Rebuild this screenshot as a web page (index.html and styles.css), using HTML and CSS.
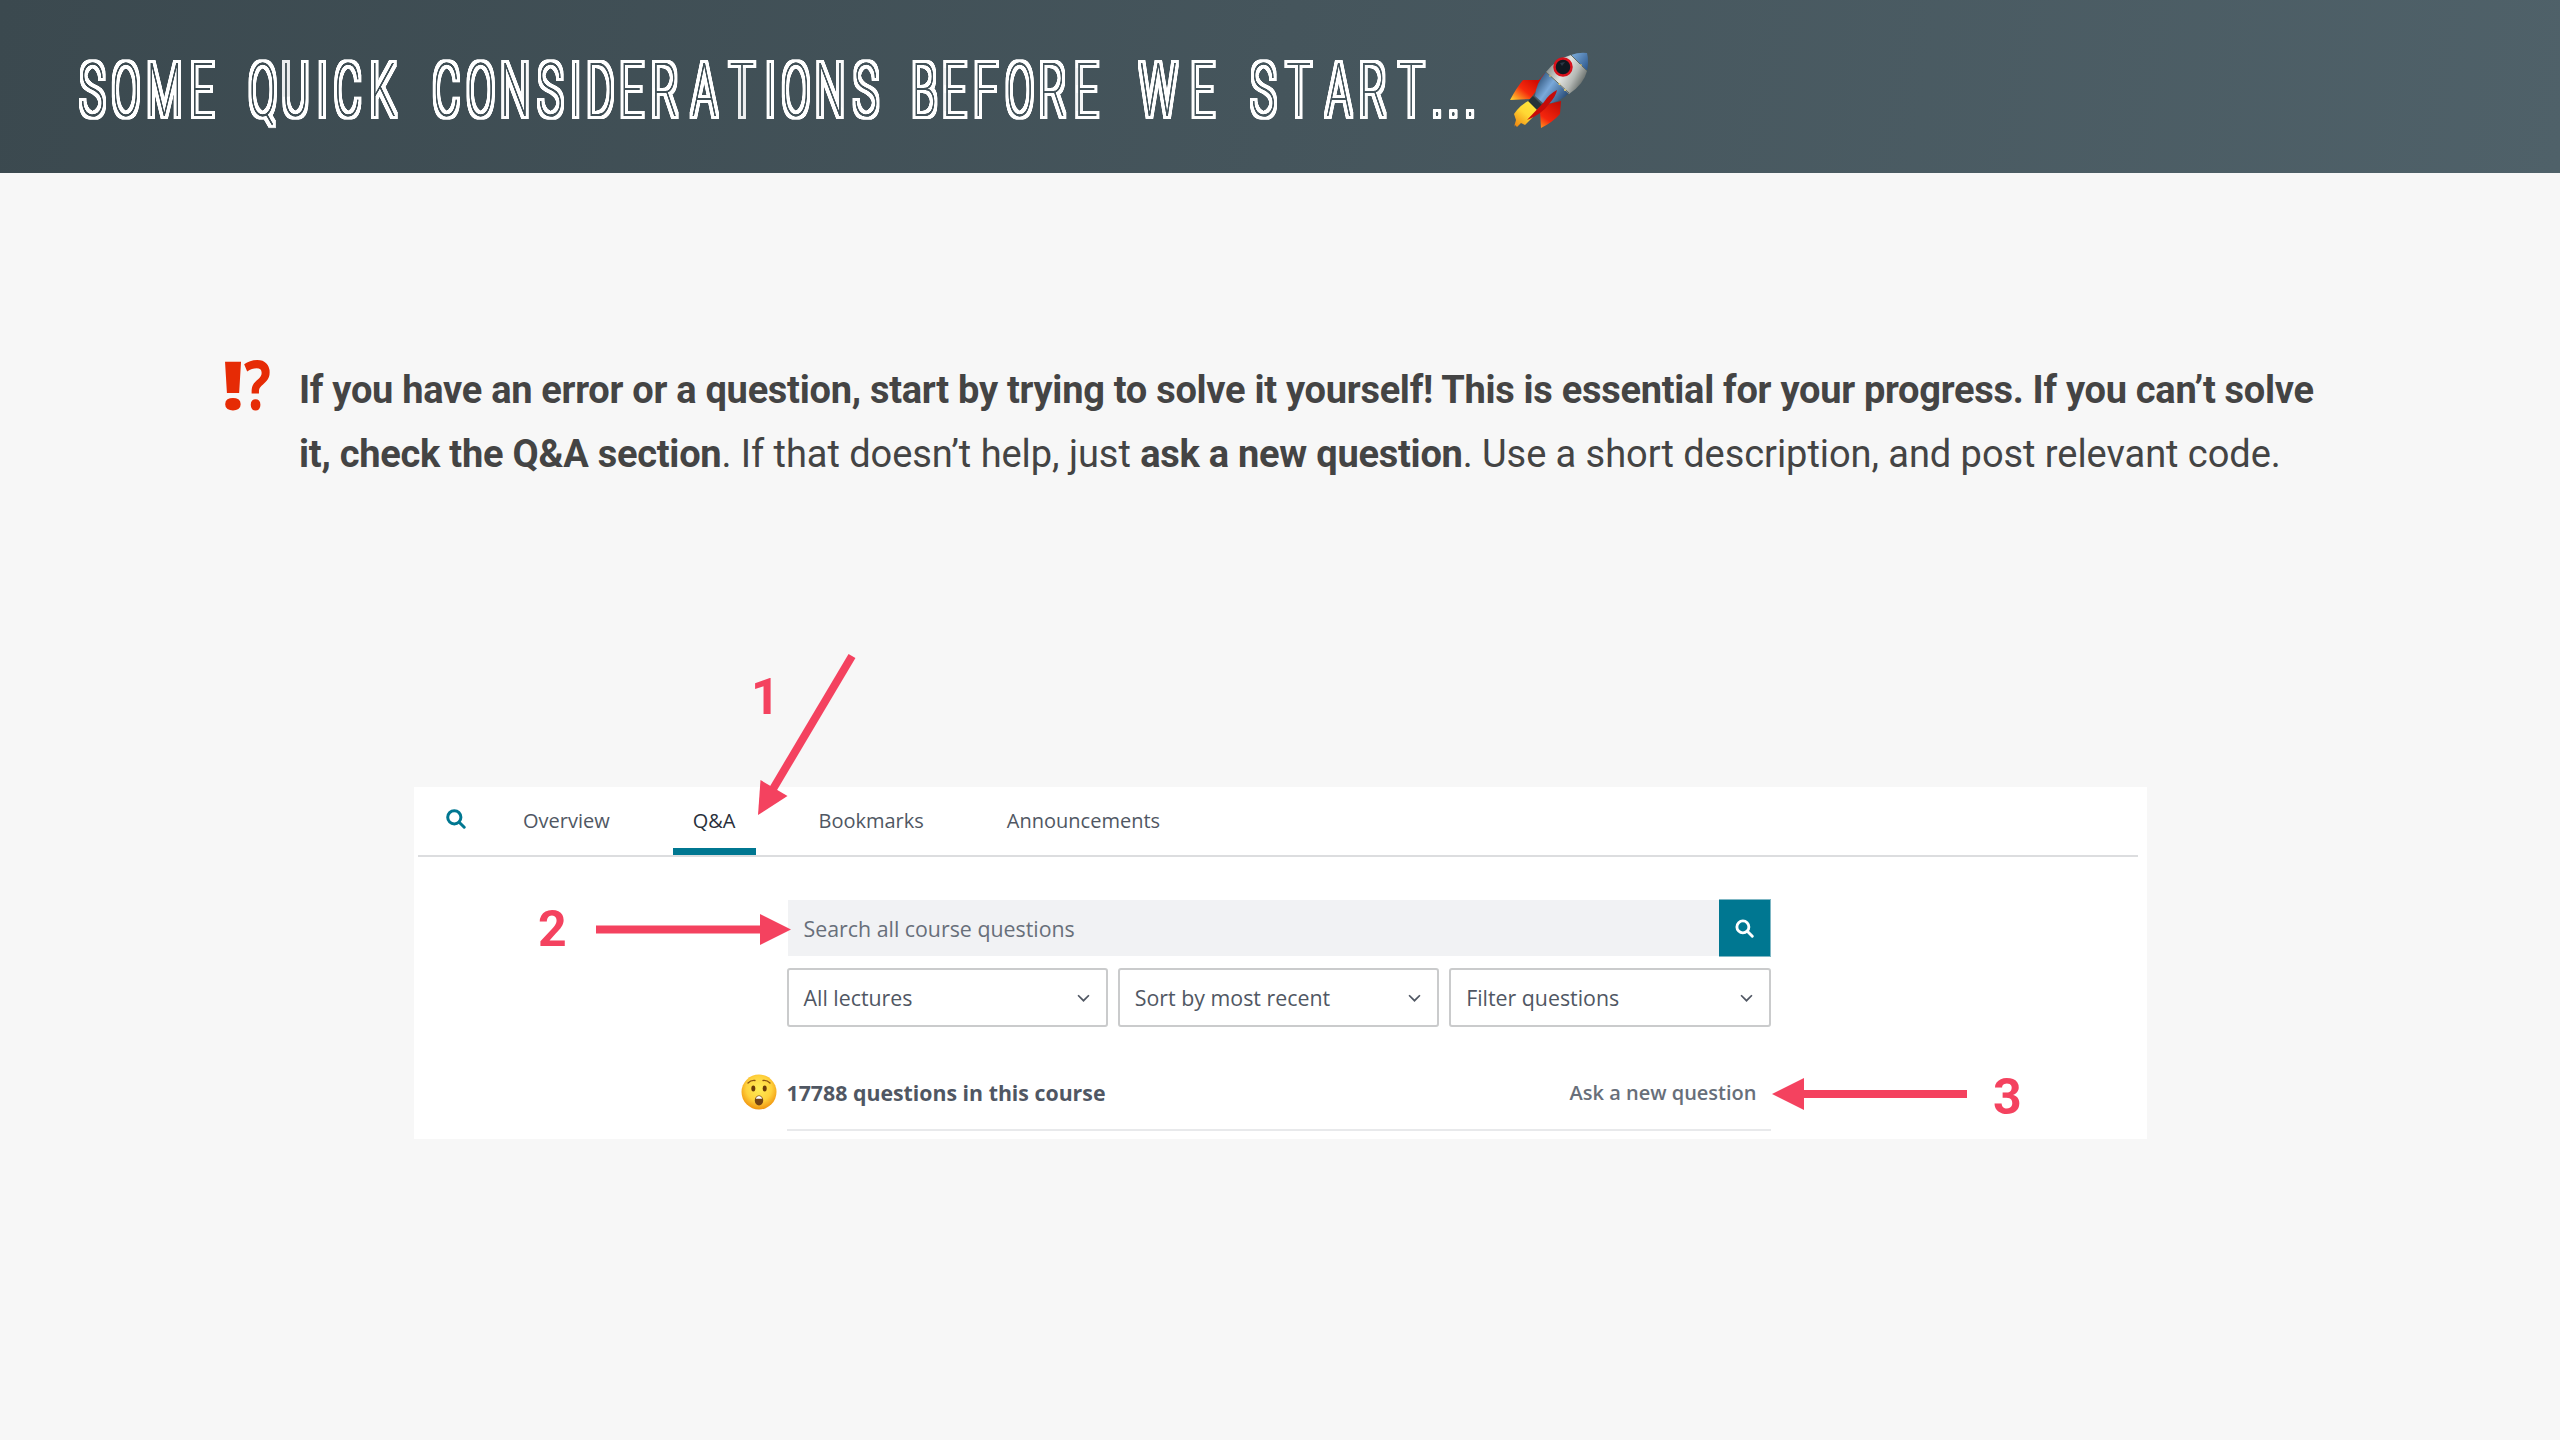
FILE: index.html
```html
<!DOCTYPE html>
<html lang="en">
<head>
<meta charset="utf-8">
<title>Some quick considerations before we start</title>
<link rel="stylesheet" href="styles.css">
</head>
<body>
<div class="slide">
  <header class="header">
    <svg class="title" viewBox="0 0 1500 172" role="heading" aria-level="1">
      <defs>
        <filter id="inline-outline" filterUnits="userSpaceOnUse" x="0" y="0" width="1500" height="172" color-interpolation-filters="sRGB">
          <feComponentTransfer in="SourceGraphic" result="core"><feFuncA type="linear" slope="1.5"/></feComponentTransfer>
          <feMorphology in="core" operator="dilate" radius="3" result="wide"/>
          <feComposite in="wide" in2="core" operator="out"/>
        </filter>
      </defs>
      <g filter="url(#inline-outline)">
        <text class="title-text" transform="scale(.55 1)" y="116" x="167.8 229.1 298.7 367 418 477.6 536.9 586 632.2 697 754 811.5 874 936.4 1000.5 1046.7 1091 1148 1209 1280.5 1349 1400.5 1447.3 1509 1574.5 1627 1680 1735 1792 1854 1914 1975 2036 2106 2186 2245 2296.9 2361.3 2434 2496 2566 2613.3 2643.1 2673.3">SOME QUICK CONSIDERATIONS BEFORE WE START...</text>
      </g>
    </svg>
    <svg class="rocket" viewBox="0 0 130 120" aria-label="rocket">
      <defs>
        <linearGradient id="hull" x1="64" y1="45" x2="98" y2="64" gradientUnits="userSpaceOnUse">
          <stop offset="0" stop-color="#8d9492"/><stop offset=".4" stop-color="#e2e4e1"/><stop offset=".7" stop-color="#b4b8b4"/><stop offset="1" stop-color="#5f6663"/>
        </linearGradient>
        <linearGradient id="blue" x1="56" y1="52" x2="84" y2="72" gradientUnits="userSpaceOnUse">
          <stop offset="0" stop-color="#33577e"/><stop offset=".4" stop-color="#7aa9da"/><stop offset="1" stop-color="#254872"/>
        </linearGradient>
        <linearGradient id="nose" x1="90" y1="24" x2="109" y2="38" gradientUnits="userSpaceOnUse">
          <stop offset="0" stop-color="#82b2df"/><stop offset="1" stop-color="#2b568c"/>
        </linearGradient>
        <linearGradient id="fin-l" x1="54" y1="50" x2="36" y2="72" gradientUnits="userSpaceOnUse">
          <stop offset="0" stop-color="#d30d04"/><stop offset=".5" stop-color="#f62a0c"/><stop offset="1" stop-color="#ffc62e"/>
        </linearGradient>
        <linearGradient id="fin-r" x1="78" y1="72" x2="60" y2="98" gradientUnits="userSpaceOnUse">
          <stop offset="0" stop-color="#c40c04"/><stop offset=".65" stop-color="#f5260d"/><stop offset="1" stop-color="#ff9a20"/>
        </linearGradient>
        <linearGradient id="flame" x1="56" y1="72" x2="36" y2="96" gradientUnits="userSpaceOnUse">
          <stop offset="0" stop-color="#ffe93c"/><stop offset=".5" stop-color="#ffd834"/><stop offset="1" stop-color="#f08a12"/>
        </linearGradient>
      </defs>
      <path fill="url(#fin-l)" d="M65 43 59 50 43 50Q37 57 30 70L50 69 57 60Z"/>
      <path fill="url(#fin-r)" d="M81 71 80 84Q73 92 61 98L60 82 69 74Z"/>
      <path fill="url(#flame)" d="M50 70 59 77Q58 83 52 88L45 95 41 93 37 97 35 95 34 97 36 90 34 84 37 80Q42 74 50 70Z"/>
      <path fill="#273238" d="M53 66 62 75 57 80 48 71Z"/>
      <path fill="url(#blue)" d="M55 66Q56 53 66 42L89 63Q80 73 64 74Z"/>
      <path fill="url(#hull)" d="M66 42Q76 29 91 25L107 41Q104 54 89 64Z"/>
      <path fill="url(#nose)" d="M91 25Q99 22 107 23Q109 31 107 41Z"/>
      <path fill="none" stroke="#636b61" d="M66 42 89 63M91 25 107 41"/>
      <circle cx="83" cy="37" r="8.5" fill="#101820" stroke="#d7121c" stroke-width="2.5"/>
      <path fill="#2c3846" d="M80 33 85 32 82 36Z"/>
      <path fill="#c60b08" d="M77 60Q69 64 64 72L47 90Q62 84 69 74 76 66 77 60Z"/>
      <g fill="#eed26e"><circle cx="79.5" cy="54" r="1"/><circle cx="85" cy="60" r="1"/><circle cx="101" cy="35" r=".8"/><circle cx="70" cy="46" r=".8"/></g>
    </svg>
  </header>

  <section class="note">
    <svg class="alert" viewBox="0 0 60 64">
      <text class="alert-text" x="-1" y="52" textLength="22" lengthAdjust="spacingAndGlyphs">!</text>
      <text class="alert-text question" x="21" y="52" textLength="27" lengthAdjust="spacingAndGlyphs">?</text>
    </svg>
    <p class="note-text"><span class="line line-1"><b>If you have an error or a question, start by trying to solve it yourself! This is essential for your progress. If you can’t solve</b></span><span class="line line-2"><b>it, check the Q&amp;A section</b>. If that doesn’t help, just <b>ask a new question</b>. Use a short description, and post relevant code.</span></p>
  </section>

  <main class="panel">
    <nav class="tabs">
      <svg class="tab-icon" viewBox="0 0 20 20"><circle cx="8.3" cy="8.3" r="6.6"/><path d="m13.2 13.2 5 5"/></svg>
      <span class="tab">Overview</span>
      <span class="tab active">Q&amp;A</span>
      <span class="tab">Bookmarks</span>
      <span class="tab">Announcements</span>
    </nav>
    <div class="content">
      <div class="search">
        <div class="search-field">Search all course questions</div>
        <div class="search-button"><svg viewBox="0 0 20 20"><circle cx="8.3" cy="8.3" r="6.3"/><path d="m13.2 13.2 5 5"/></svg></div>
      </div>
      <div class="filters">
        <div class="select"><span>All lectures</span><svg viewBox="0 0 12 8"><path d="m1 1 5 5 5-5"/></svg></div>
        <div class="select"><span>Sort by most recent</span><svg viewBox="0 0 12 8"><path d="m1 1 5 5 5-5"/></svg></div>
        <div class="select"><span>Filter questions</span><svg viewBox="0 0 12 8"><path d="m1 1 5 5 5-5"/></svg></div>
      </div>
      <div class="summary">
        <svg class="face" viewBox="0 0 36 36" aria-label="astonished face">
          <defs><radialGradient id="skin" cx=".5" cy=".4" r=".6"><stop offset="0" stop-color="#ffed57"/><stop offset=".6" stop-color="#ffd23c"/><stop offset="1" stop-color="#f0940f"/></radialGradient></defs>
          <circle cx="18" cy="18" r="17.5" fill="url(#skin)"/>
          <ellipse cx="12.3" cy="14.5" rx="2" ry="3" fill="#6b3a08"/><ellipse cx="23.7" cy="14.5" rx="2" ry="3" fill="#6b3a08"/>
          <path d="M7 9Q10 6 14 6.5M22 6.5Q26 6 29 9" fill="none" stroke="#8a5310" stroke-width="1.3" stroke-linecap="round"/>
          <ellipse cx="18" cy="26.5" rx="4.2" ry="5" fill="#734213"/>
          <path d="M14.7 24.8Q15.5 22 18 22T21.3 24.8Z" fill="#fff"/>
        </svg>
        <span class="count">17788 questions in this course</span>
        <span class="ask">Ask a new question</span>
      </div>
    </div>
  </main>

  <svg class="callouts" viewBox="0 0 2560 1440">
    <path d="M852 656 773 789" stroke-width="8"/>
    <path class="head" d="M758 815 760.5 780 787.5 796Z"/>
    <path d="M596 929.5H762" stroke-width="8"/>
    <path class="head" d="M791 929.5 760 914V945Z"/>
    <path d="M1967 1094H1802" stroke-width="8"/>
    <path class="head" d="M1772 1094 1804 1078V1110Z"/>
    <text x="751" y="714">1</text>
    <text x="538" y="946">2</text>
    <text x="1993" y="1114">3</text>
  </svg>
</div>
</body>
</html>
```
FILE: styles.css
```css
* { box-sizing: border-box; }
body { margin: 0; background: #f7f7f7; }
.slide {
  position: relative;
  width: 2560px;
  height: 1440px;
  overflow: hidden;
  font-family: Roboto, sans-serif;
}

.header {
  display: flex;
  height: 173px;
  background: linear-gradient(100deg, #3b494f, #4f6169);
}
.title { width: 1500px; height: 172px; flex: none; }
.title-text {
  font: 100 74.5px Roboto, sans-serif;
  fill: #fff;
  text-anchor: middle;
}
.rocket { width: 130px; height: 120px; margin: 30px 0 0 -20px; }

.note { display: flex; margin: 185px 0 0 223px; height: 130px; }
.alert { width: 60px; height: 64px; overflow: visible; flex: none; }
.alert-text { font: 800 68px "Open Sans", sans-serif; fill: #e62b05; }
.alert-text.question { font-weight: 700; }
.note-text {
  margin: 0 0 0 16px;
  font-size: 38px;
  line-height: 64px;
  color: #444;
}
.line { display: block; white-space: nowrap; }
.line-1 { letter-spacing: -.28px; }
.line-2 { letter-spacing: -.05px; }
.line-2 b { letter-spacing: -.25px; }

.panel {
  width: 1733px;
  height: 352px;
  margin: 299px 0 0 414px;
  padding: 0 9px 0 4px;
  background: #fff;
  font-family: "Open Sans", sans-serif;
  color: #505763;
}
.tabs {
  display: flex;
  height: 70px;
  border-bottom: 2px solid #dcdddf;
  font-size: 20px;
}
.tab-icon { width: 20px; height: 20px; margin: 22px 37px 0 28px; }
.tab { padding: 0 20px; margin-right: 43px; line-height: 67px; }
.tab.active { color: #29303b; border-bottom: 7px solid #007791; }
.tab-icon circle, .tab-icon path { fill: none; stroke: #007791; stroke-width: 3; stroke-linecap: round; }

.content { width: 984px; margin: 42px 0 0 368.5px; font-size: 21.35px; }
.search { display: flex; height: 58px; }
.search-field {
  flex: 1;
  height: 56px;
  margin: 1px 0 0 1px;
  padding-left: 16px;
  line-height: 57px;
  background: #f1f2f4;
  color: #686f7a;
}
.search-button {
  display: flex;
  align-items: center;
  justify-content: center;
  width: 52px;
  background: #007791;
  border: 1px solid #7fb7c4;
  border-left: 0;
}
.search-button svg { width: 19px; height: 19px; fill: none; stroke: #fff; stroke-width: 3; stroke-linecap: round; }
.filters { display: grid; grid-template-columns: repeat(3, 1fr); gap: 10px; margin-top: 11px; }
.select {
  display: flex;
  align-items: center;
  justify-content: space-between;
  height: 59px;
  padding: 0 16px 0 15px;
  border: 2px solid #cacbcc;
  border-radius: 3px;
}
.select svg { width: 13px; height: 9px; margin-top: 2px; fill: none; stroke: #505763; stroke-width: 1.6; }
.summary {
  display: flex;
  align-items: center;
  height: 104px;
  padding: 28px 14px 0 0;
  border-bottom: 2px solid #e8e9eb;
}
.face { width: 36px; height: 36px; margin: 0 10px 0 -46px; }
.count { font-size: 21.3px; font-weight: 700; }
.ask { margin-left: auto; font-size: 20px; font-weight: 600; color: #686f7a; }

.callouts { position: absolute; inset: 0; width: 2560px; height: 1440px; }
.callouts path { stroke: #f4425f; fill: none; }
.callouts .head { fill: #f4425f; stroke: none; }
.callouts text { font: 700 50px Roboto, sans-serif; fill: #f4425f; }
```
